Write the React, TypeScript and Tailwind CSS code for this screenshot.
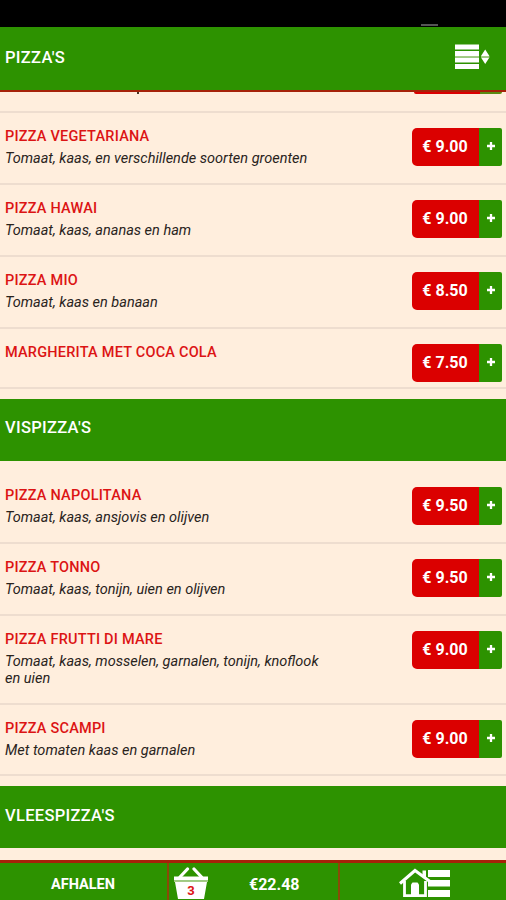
type Item = { name: string; desc?: string; price: string; row: string };

const pizzas: Item[] = [
  { name: 'PIZZA VEGETARIANA', desc: 'Tomaat, kaas, en verschillende soorten groenten', price: '9.00', row: 'h-[72px]' },
  { name: 'PIZZA HAWAI', desc: 'Tomaat, kaas, ananas en ham', price: '9.00', row: 'h-[72px]' },
  { name: 'PIZZA MIO', desc: 'Tomaat, kaas en banaan', price: '8.50', row: 'h-[72px]' },
  { name: 'MARGHERITA MET COCA COLA', price: '7.50', row: 'h-[60px]' },
];

const fishPizzas: Item[] = [
  { name: 'PIZZA NAPOLITANA', desc: 'Tomaat, kaas, ansjovis en olijven', price: '9.50', row: 'h-[72px]' },
  { name: 'PIZZA TONNO', desc: 'Tomaat, kaas, tonijn, uien en olijven', price: '9.50', row: 'h-[72px]' },
  { name: 'PIZZA FRUTTI DI MARE', desc: 'Tomaat, kaas, mosselen, garnalen, tonijn, knoflook en uien', price: '9.00', row: 'h-[89px]' },
  { name: 'PIZZA SCAMPI', desc: 'Met tomaten kaas en garnalen', price: '9.00', row: 'h-[71px]' },
];

function Row({ item }: { item: Item }) {
  return (
    <li className={`flex shrink-0 items-start justify-between border-b-2 border-[#eeddcf] pl-[5px] pr-[4px] ${item.row}`}>
      <div className="w-[325px] pt-[15px]">
        <h3 className="whitespace-nowrap text-[14.5px] font-medium leading-[18px] tracking-[0.22px] text-[#dc1414]">{item.name}</h3>
        {item.desc && <p className="pt-[4px] text-[14.5px] italic leading-[17px] text-[#29231c]">{item.desc}</p>}
      </div>
      <button className="mt-[15px] flex h-[38px] w-[90px] overflow-hidden rounded-l-[5px] rounded-r-[2px] font-bold text-white">
        <span className="flex h-full w-[67px] items-center justify-center bg-[#db0000] pr-px text-[16px]">€ {item.price}</span>
        <span className="flex h-full w-[23px] items-center justify-center bg-[#2d9200] pb-[2px]">
          <svg width="8" height="8" viewBox="0 0 8 8" fill="none" stroke="#fff" strokeWidth="2.3"><path d="M4 0v8M0 4h8" /></svg>
        </span>
      </button>
    </li>
  );
}

function Section({ title, pad }: { title: string; pad: string }) {
  return (
    <h2 className={`flex h-[62px] shrink-0 items-center bg-[#2d9200] pl-[5px] text-[16.5px] font-medium tracking-[0.3px] text-white ${pad}`}>{title}</h2>
  );
}

export default function App() {
  return (
    <div className="flex h-[900px] w-[506px] flex-col overflow-hidden bg-[#ffeedd] font-['Roboto',sans-serif]">
      <div className="flex h-[27px] shrink-0 items-end bg-black pl-[421px]">
        <div className="mb-px h-[2px] w-[17px] bg-[#555]" />
      </div>
      <header className="flex h-[65px] shrink-0 items-center justify-between border-b-2 border-[#a62209] bg-[#2d9200] pl-[5px] pr-[16px] text-white">
        <h1 className="pb-[1px] text-[16.5px] font-medium tracking-[0.3px]">PIZZA'S</h1>
        <svg className="mb-[4px]" width="35" height="26" viewBox="0 0 35 26" fill="#fff">
          <path d="M0 .500h24v5H0zM0 7h24v5H0zM0 13.500h24v5H0zM0 20h24v5H0z" />
          <path d="M26 12 30.200 5.500l4.200 6.500zM26 13.500h8.400L30.200 20z" />
          <path d="M0 12h24v1.500H0zM26 12h8.400v1.500H26z" fill="#a5cb86" />
        </svg>
      </header>
      <main className="flex min-h-0 flex-1 flex-col">
        <div className="flex h-[21px] shrink-0 items-start border-b-2 border-[#eeddcf] pl-[137px] pr-[4px]">
          <span className="h-[2px] w-[2px] bg-[#433427]" />
          <span className="ml-auto flex h-[2px] w-[88px] overflow-hidden rounded-b-[2px]">
            <span className="w-[66px] bg-[#db0000]" />
            <span className="w-[22px] bg-[#5b8c13]" />
          </span>
        </div>
        <ul className="flex shrink-0 flex-col">{pizzas.map((item) => <Row key={item.name} item={item} />)}</ul>
        <div className="mt-[10px] shrink-0"><Section title="VISPIZZA'S" pad="pb-[4px]" /></div>
        <ul className="flex shrink-0 flex-col pt-[11px]">{fishPizzas.map((item) => <Row key={item.name} item={item} />)}</ul>
        <div className="mt-[10px] shrink-0"><Section title="VLEESPIZZA'S" pad="pb-[2px]" /></div>
      </main>
      <footer className="flex h-[40px] shrink-0 border-t-[3px] border-[#a62209] bg-[#2d9200] font-bold text-white">
        <div className="flex w-[169px] items-center justify-center border-r-2 border-[#8a4a08] pr-px pt-[6px] text-[14.5px]">AFHALEN</div>
        <div className="flex w-[171px] items-start border-r-2 border-[#8a4a08] pl-[5px]">
          <div className="relative mt-[4px] h-[33px] w-[34px]">
            <svg width="34" height="33" viewBox="0 0 34 33" fill="none">
              <path d="M6 10 13.500 2M27.500 10 20 2" stroke="#fff" strokeWidth="3.200" strokeLinecap="round" />
              <path d="M0 9.500h34v4H0zM1 15h32l-3 17H4z" fill="#fff" />
              <path d="M0 13.500h34v1.500H0z" fill="#a5cb86" />
            </svg>
            <span className="absolute left-0 top-[15px] w-full text-center text-[13px] font-bold leading-[18px] text-[#dc1414]">3</span>
          </div>
          <span className="ml-[41px] mt-[11px] text-[16px] font-bold leading-[22px]">€22.48</span>
        </div>
        <div className="flex flex-1 items-start pl-[59px] pt-[5px]">
          <svg width="52" height="30" viewBox="0 0 52 30">
            <path d="M29 2h22v7H29zM29 12h22v6.500H29zM29 22h22v7H29z" fill="#fff" />
            <path d="M6 13 16 4l12 10v15H6z" fill="#2d9200" />
            <path d="M1 15.500 16 2.500l19 14" fill="none" stroke="#fff" strokeWidth="3" />
            <path d="M5.500 13v14.600h21V13" fill="none" stroke="#fff" strokeWidth="2.800" />
            <path d="M23.500 2.500H27V12l-3.500-3z" fill="#fff" />
            <path d="M12 28V16.500l1.500-2h5l1.500 2V28z" fill="#fff" />
          </svg>
        </div>
      </footer>
    </div>
  );
}
